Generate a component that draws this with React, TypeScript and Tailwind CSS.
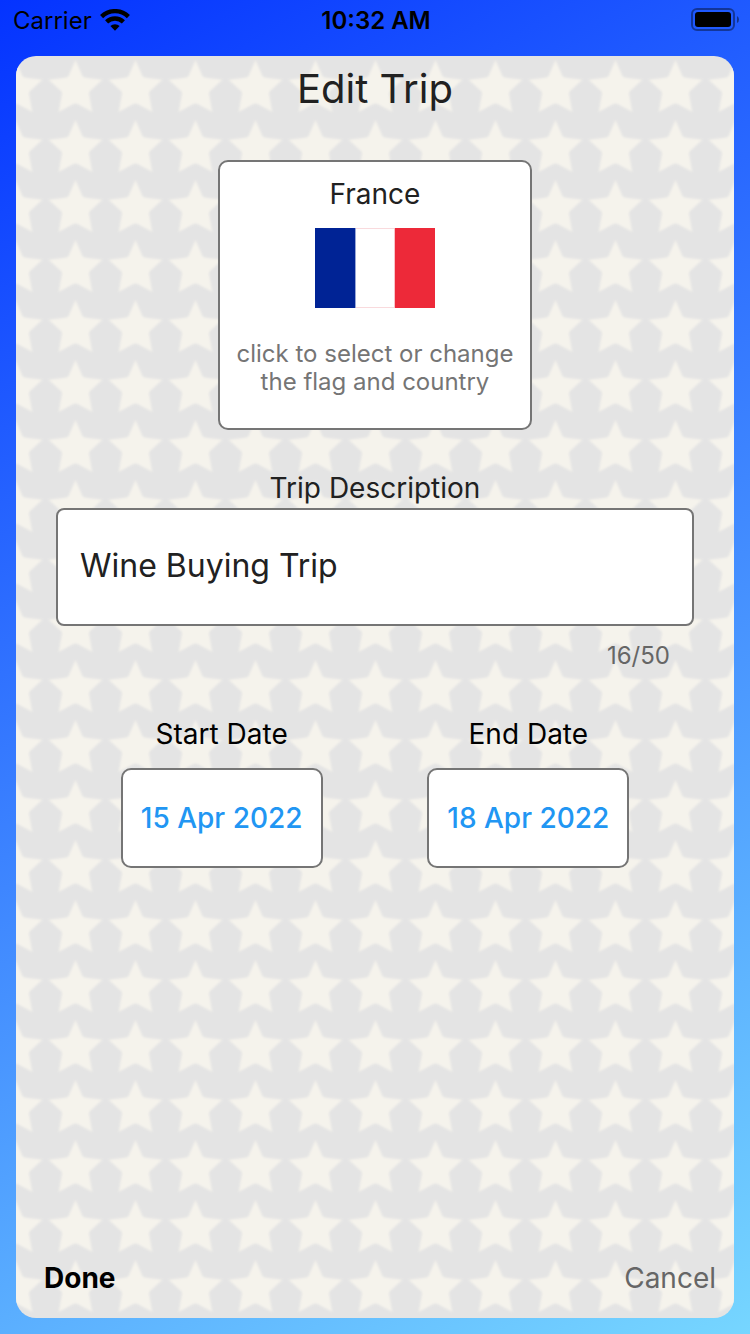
import { useState } from "react";

const MAX_LENGTH = 50;

function StarBackdrop() {
  return (
    <svg className="absolute inset-0 h-full w-full" aria-hidden="true">
      <defs>
        <filter id="soft" x="-10%" y="-10%" width="120%" height="120%">
          <feGaussianBlur stdDeviation="0.9" />
        </filter>
        <pattern id="stars" x="30" y="0" width="60" height="60" patternUnits="userSpaceOnUse">
          <path
            d="M29.5 4 L36.5 20 Q37 21.2 38.5 21.5 L56.5 23.7 L44 35 Q43 36 43 37.5 L46.3 56 L31.5 48 Q29.5 47 27.5 48 L12.7 56 L16 37.5 Q16 36 15 35 L2.5 23.7 L20.5 21.5 Q22 21.2 22.5 20 Z"
            fill="#f5f3ec"
            filter="url(#soft)"
          />
        </pattern>
      </defs>
      <rect width="100%" height="100%" fill="#e4e4e4" />
      <rect width="100%" height="100%" fill="url(#stars)" />
    </svg>
  );
}

function WifiIcon() {
  return (
    <svg className="h-[22px] w-[30px]" viewBox="0 0 30 22" aria-hidden="true">
      <g fill="none" stroke="#000" strokeWidth="4.4">
        <path d="M1.6 7.6 A19.2 19.2 0 0 1 28.4 7.6" />
        <path d="M6.6 12.9 A12 12 0 0 1 23.4 12.9" />
      </g>
      <path d="M10.4 17 A6.6 6.6 0 0 1 19.6 17 L15 21.8 Z" fill="#000" />
    </svg>
  );
}

function BatteryIcon() {
  return (
    <svg className="h-[24px] w-[48px]" viewBox="0 0 48 24" aria-hidden="true">
      <rect x="1" y="1" width="42" height="21" rx="5" fill="none" stroke="#000" strokeOpacity="0.4" strokeWidth="2" />
      <rect x="4" y="4" width="36" height="15" rx="3" fill="#000" />
      <path d="M46 8 Q48 9 48 11.5 Q48 14 46 15 Z" fill="#000" fillOpacity="0.45" />
    </svg>
  );
}

function StatusBar() {
  return (
    <header className="grid h-10 grid-cols-3 items-center pl-[13px] pr-[11px] text-2xl text-black">
      <div className="flex items-center gap-2">
        <span className="pt-0.5">Carrier</span>
        <WifiIcon />
      </div>
      <span className="pt-0.5 text-center font-semibold">10:32 AM</span>
      <div className="flex justify-end">
        <BatteryIcon />
      </div>
    </header>
  );
}

function FranceFlag() {
  return (
    <svg className="h-20 w-[120px]" viewBox="0 0 120 80" role="img" aria-label="Flag of France">
      <rect width="120" height="80" fill="#fff" />
      <rect x="40" y="0.5" width="41" height="79" fill="none" stroke="#f9dadd" />
      <rect width="40" height="80" fill="#002395" />
      <rect x="40" width="1" height="80" fill="#99a7d5" />
      <rect x="80" width="40" height="80" fill="#ed2939" />
      <rect x="79" width="1" height="80" fill="#f9c3c8" />
    </svg>
  );
}

function DateField({ id, label, value }: { id: string; label: string; value: string }) {
  return (
    <div className="flex w-[202px] flex-col items-center gap-[14px]">
      <span id={id} className="text-[28px] leading-10 text-black">
        {label}
      </span>
      <button
        type="button"
        aria-describedby={id}
        className="h-[100px] w-full whitespace-nowrap rounded-[10px] border-2 border-[#757575] bg-white text-[28px] font-medium text-[#2196f3]"
      >
        {value}
      </button>
    </div>
  );
}

export default function App() {
  const [description, setDescription] = useState("Wine Buying Trip");

  return (
    <div className="flex min-h-screen flex-col bg-[linear-gradient(151deg,#0433ff,#76d6ff)] font-['Inter','Liberation_Sans',sans-serif]">
      <StatusBar />
      <main className="relative m-4 flex grow flex-col overflow-hidden rounded-[20px]">
        <StarBackdrop />
        <form className="relative flex grow flex-col" onSubmit={(event) => event.preventDefault()}>
          <h1 className="pt-2 text-center text-[40px] leading-[50px] text-[#212121]">Edit Trip</h1>

          <button
            type="button"
            className="mt-[46px] flex h-[270px] w-[314px] flex-col items-center self-center rounded-[10px] border-2 border-[#757575] bg-white pt-3"
          >
            <span className="text-[28px] leading-10 text-[#212121]">France</span>
            <span className="mt-[14px] block">
              <FranceFlag />
            </span>
            <span className="mt-8 text-2xl leading-7 text-[#757575]">
              click to select or change
              <br />
              the flag and country
            </span>
          </button>

          <div className="mt-[38px] flex flex-col px-10">
            <label htmlFor="description" className="text-center text-[28px] leading-10 text-[#212121]">
              Trip Description
            </label>
            <input
              id="description"
              type="text"
              maxLength={MAX_LENGTH}
              value={description}
              onChange={(event) => setDescription(event.target.value)}
              className="h-[118px] w-full rounded-lg border-2 border-[#757575] bg-white px-[22px] pb-1 text-[32px] text-[#212121] outline-none"
            />
            <span className="mt-4 pr-6 text-right text-2xl leading-7 text-[#666]">
              {description.length}/{MAX_LENGTH}
            </span>
          </div>

          <div className="mt-11 flex justify-evenly">
            <DateField id="start-date" label="Start Date" value="15 Apr 2022" />
            <DateField id="end-date" label="End Date" value="18 Apr 2022" />
          </div>

          <div className="mt-auto flex justify-between pb-5 pl-7 pr-[18px] text-[28px] leading-10">
            <button type="submit" className="font-bold text-black">
              Done
            </button>
            <button type="button" className="text-[#666]">
              Cancel
            </button>
          </div>
        </form>
      </main>
    </div>
  );
}
